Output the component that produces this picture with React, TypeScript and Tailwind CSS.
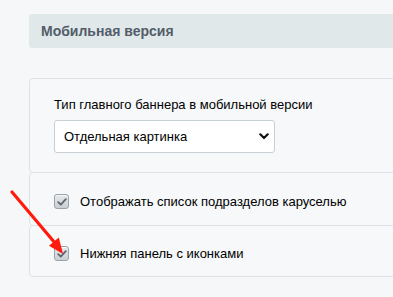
import React from "react";

function Check() {
  return (
    <div className="flex h-[15px] w-[15px] shrink-0 items-center justify-center rounded-[3px] border border-[#9aa3a9] bg-gradient-to-b from-[#e6e9eb] to-[#c9cfd3] shadow-[inset_0_1px_0_rgba(255,255,255,0.7)]">
      <svg width="10" height="8" viewBox="0 0 10 8">
        <path d="M1.2 4.2 L3.8 6.6 L8.8 1.2" fill="none" stroke="#5d666d" strokeWidth="1.8" strokeLinecap="round" strokeLinejoin="round" />
      </svg>
    </div>
  );
}

export default function App() {
  return (
    <div
      className="relative h-[297px] w-[393px] overflow-hidden bg-[#f5f7f8] pl-[29px] pt-[14px] text-[13px] text-black"
      style={{ fontFamily: '"Liberation Sans", Arial, sans-serif' }}
    >
      <div className="w-[420px]">
        <div className="flex h-[34px] items-center rounded-l-[3px] bg-[#e0e8ea] pl-[12px] text-[14px] font-bold text-[#535c69]">
          Мобильная версия
        </div>
        <div className="mt-[30px]">
          <div className="rounded-[4px] border border-[#dce3e7] bg-[#f6f8f9] pl-[24px] pt-[18px] pb-[19px]">
            <div className="h-[16px] leading-[16px]">Тип главного баннера в мобильной версии</div>
            <div className="mt-[7px] flex h-[33px] w-[221px] items-center justify-between rounded-[3px] border border-[#c6d0d5] bg-white pl-[9px] pr-[5px]">
              <span>Отдельная картинка</span>
              <svg width="10" height="7" viewBox="0 0 10 7">
                <path d="M1.3 1.3 L5 5 L8.7 1.3" fill="none" stroke="#111" strokeWidth="2.2" strokeLinecap="round" strokeLinejoin="round" />
              </svg>
            </div>
          </div>
          <div className="-mt-px flex items-center gap-[11px] rounded-[4px] border border-[#dce3e7] bg-[#f6f8f9] pl-[24px] pt-[21px] pb-[16px]">
            <Check />
            <span className="leading-[15px]">Отображать список подразделов каруселью</span>
          </div>
          <div className="-mt-px flex items-center gap-[11px] rounded-[4px] border border-[#dce3e7] bg-[#f6f8f9] pl-[24px] pt-[20px] pb-[15px]">
            <Check />
            <span className="leading-[15px]">Нижняя панель с иконками</span>
          </div>
        </div>
      </div>
      <svg className="pointer-events-none absolute left-0 top-0" width="393" height="297" viewBox="0 0 393 297">
        <line x1="12" y1="192" x2="55" y2="243" stroke="#ff1a0d" strokeWidth="3.2" strokeLinecap="round" />
        <polygon points="63,254 49,245.8 58.8,237.6" fill="#ff1a0d" />
      </svg>
    </div>
  );
}
